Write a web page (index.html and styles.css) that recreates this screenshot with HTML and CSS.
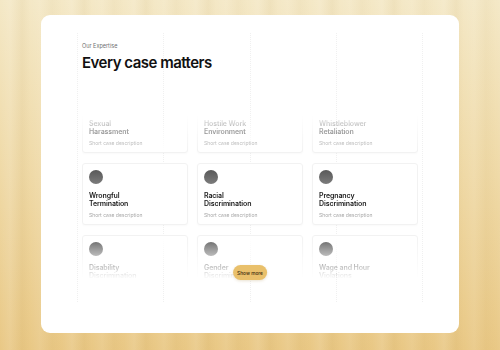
FILE: index.html
```html
<!DOCTYPE html>
<html>
<head>
<meta charset="utf-8">
<link rel="stylesheet" href="styles.css">
</head>
<body>
<div class="frame">
  <div class="panel">
    <section class="stage">
      <div class="guides"><span></span><span></span><span></span><span></span></div>
      <header class="head">
        <p class="eyebrow">Our Expertise</p>
        <h1 class="title">Every case matters</h1>
      </header>
      <div class="grid-wrap">
        <div class="grid">
          <div class="case"><div class="dot"></div><h3 class="case-title">Sexual<br>Harassment</h3><p class="case-desc">Short case description</p></div>
          <div class="case"><div class="dot"></div><h3 class="case-title">Hostile Work<br>Environment</h3><p class="case-desc">Short case description</p></div>
          <div class="case"><div class="dot"></div><h3 class="case-title">Whistleblower<br>Retaliation</h3><p class="case-desc">Short case description</p></div>
          <div class="case"><div class="dot"></div><h3 class="case-title">Wrongful<br>Termination</h3><p class="case-desc">Short case description</p></div>
          <div class="case"><div class="dot"></div><h3 class="case-title">Racial<br>Discrimination</h3><p class="case-desc">Short case description</p></div>
          <div class="case"><div class="dot"></div><h3 class="case-title">Pregnancy<br>Discrimination</h3><p class="case-desc">Short case description</p></div>
          <div class="case"><div class="dot"></div><h3 class="case-title">Disability<br>Discrimination</h3><p class="case-desc">Short case description</p></div>
          <div class="case"><div class="dot"></div><h3 class="case-title">Gender<br>Discrimination</h3><p class="case-desc">Short case description</p></div>
          <div class="case"><div class="dot"></div><h3 class="case-title">Wage and Hour<br>Violations</h3><p class="case-desc">Short case description</p></div>
        </div>
        <button class="more">Show more</button>
      </div>
    </section>
  </div>
</div>
</body>
</html>
```
FILE: styles.css
```css
* { box-sizing: border-box; }
html, body { margin: 0; padding: 0; }
body {
  width: 500px;
  height: 350px;
  overflow: hidden;
  font-family: Inter, "Noto Sans", sans-serif;
  background:
    repeating-linear-gradient(90deg,
      rgba(255,255,255,0) 0px,
      rgba(255,255,255,0.10) 10px,
      rgba(160,120,40,0.06) 22px,
      rgba(255,255,255,0) 30px,
      rgba(255,255,255,0.08) 40px,
      rgba(160,120,40,0.04) 52px,
      rgba(255,255,255,0) 62px),
    linear-gradient(180deg, #f4e8c6 0%, #efd9a6 50%, #e9c885 100%);
}
.frame {
  padding: 15px 41px 17px 41px;
  height: 350px;
}
.panel {
  background: #fff;
  border-radius: 9px;
  height: 318px;
  padding: 18px 36px 0 36px;
}
.stage {
  position: relative;
  width: 346px;
  height: 269px;
  padding: 9px 5px 0 5px;
}
.guides {
  position: absolute;
  inset: 0;
  display: grid;
  grid-template-columns: repeat(4, 1fr);
  border-right: 1px dotted #f0f0f0;
  pointer-events: none;
}
.guides span { border-left: 1px dotted #f0f0f0; }
.head { position: relative; }
.eyebrow {
  margin: 0;
  font-size: 5.5px;
  line-height: 8px;
  color: #6f6f6f;
}
.title {
  margin: 3px 0 0 0;
  font-size: 15px;
  line-height: 20px;
  font-weight: 600;
  letter-spacing: -0.5px;
  color: #111;
}
.grid-wrap {
  position: relative;
  margin-top: 18px;
}
.grid {
  display: grid;
  grid-template-columns: repeat(3, 1fr);
  column-gap: 9px;
  row-gap: 10px;
  -webkit-mask-image: linear-gradient(180deg, rgba(0,0,0,0) 24px, #000 62px, #000 144px, rgba(0,0,0,0) 188px);
  mask-image: linear-gradient(180deg, rgba(0,0,0,0) 24px, #000 62px, #000 144px, rgba(0,0,0,0) 188px);
}
.case {
  height: 62px;
  background: #fff;
  border: 1px solid #f2f2f2;
  border-radius: 3px;
  box-shadow: 0 1px 2px rgba(0,0,0,0.025);
  padding: 6px 6px;
}
.dot {
  width: 14px;
  height: 14px;
  border-radius: 50%;
  background: linear-gradient(180deg, #595959, #7c7c7c);
}
.case-title {
  margin: 8px 0 0 0;
  font-size: 7px;
  line-height: 8px;
  font-weight: 600;
  color: #1a1a1a;
  letter-spacing: -0.1px;
}
.case-desc {
  margin: 4px 0 0 0;
  font-size: 5px;
  line-height: 7px;
  color: #a8a8a8;
}
.more {
  position: absolute;
  left: 50%;
  top: 174px;
  transform: translateX(-50%);
  height: 15px;
  padding: 0 4px;
  border: none;
  border-radius: 8px;
  background: #e9c06b;
  color: #3a2a0c;
  font-family: Inter, sans-serif;
  font-size: 4.8px;
  font-weight: 500;
  box-shadow: 0 1px 3px rgba(150,110,30,0.2);
}
```
